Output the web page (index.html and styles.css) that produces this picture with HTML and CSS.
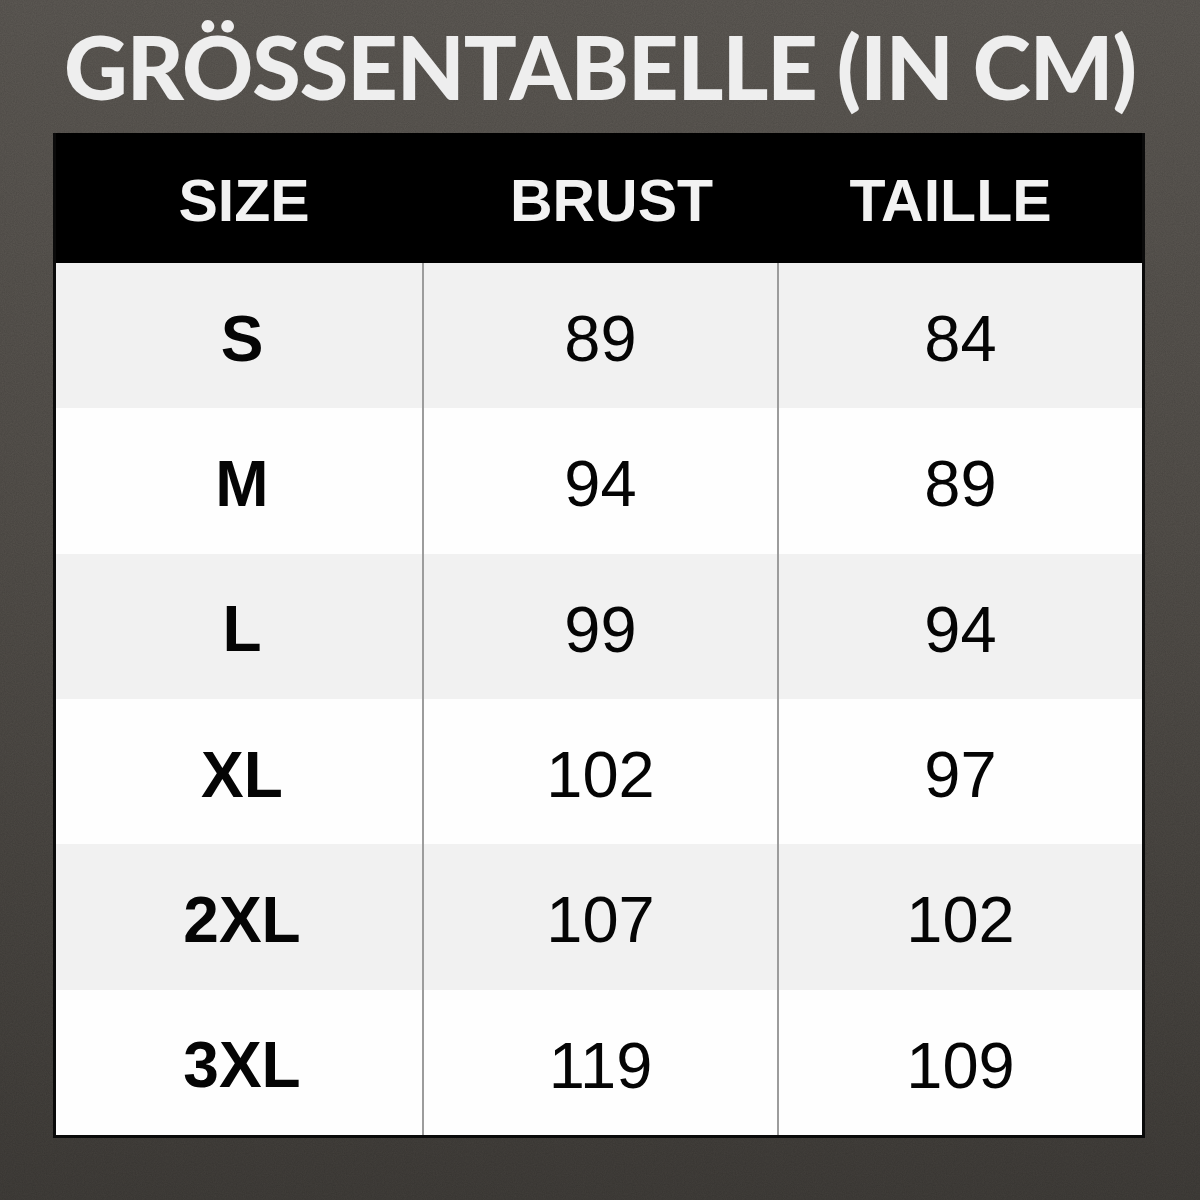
FILE: index.html
```html
<!DOCTYPE html>
<html lang="de">
<head>
<meta charset="utf-8">
<title>Größentabelle</title>
<link rel="stylesheet" href="styles.css">
</head>
<body>
<div class="page">
  <h1 class="title">GRÖSSENTABELLE (IN CM)</h1>
  <div class="table">
    <div class="head">
      <div class="hcell h1">SIZE</div>
      <div class="hcell h2">BRUST</div>
      <div class="hcell h3">TAILLE</div>
    </div>
    <div class="body">
      <div class="row alt"><div class="cell size">S</div><div class="cell num">89</div><div class="cell num">84</div></div>
      <div class="row"><div class="cell size">M</div><div class="cell num">94</div><div class="cell num">89</div></div>
      <div class="row alt"><div class="cell size">L</div><div class="cell num">99</div><div class="cell num">94</div></div>
      <div class="row"><div class="cell size">XL</div><div class="cell num">102</div><div class="cell num">97</div></div>
      <div class="row alt"><div class="cell size">2XL</div><div class="cell num">107</div><div class="cell num">102</div></div>
      <div class="row"><div class="cell size">3XL</div><div class="cell num">119</div><div class="cell num">109</div></div>
    </div>
  </div>
</div>
</body>
</html>
```

FILE: styles.css
```css
* { box-sizing: border-box; }
html, body { margin: 0; padding: 0; }
body {
  width: 1200px;
  height: 1200px;
  overflow: hidden;
  background-color: #4f4b47;
  background-image:
    url("data:image/svg+xml,%3Csvg xmlns='http://www.w3.org/2000/svg' width='300' height='300'%3E%3Cfilter id='n'%3E%3CfeTurbulence type='fractalNoise' baseFrequency='0.9' numOctaves='2' stitchTiles='stitch'/%3E%3CfeColorMatrix values='0 0 0 0 0  0 0 0 0 0  0 0 0 0 0  0 0 0 0.18 0'/%3E%3C/filter%3E%3Crect width='300' height='300' filter='url(%23n)'/%3E%3C/svg%3E"),
    linear-gradient(180deg, #5f5b56 0%, #55514c 45%, #423f3b 100%);
  font-family: "Liberation Sans", Arial, sans-serif;
}
.page {
  width: 1200px;
  height: 1200px;
  display: flex;
  flex-direction: column;
}
.title {
  margin: 0;
  height: 133px;
  display: flex;
  align-items: center;
  justify-content: center;
  font-family: "Lato", sans-serif;
  font-weight: 900;
  font-size: 88px;
  line-height: 1;
  color: #eeeeee;
  letter-spacing: -1px;
  padding-bottom: 2px;
  white-space: nowrap;
}
.table {
  margin: 0 55px 0 53px;
  border: 3px solid #0a0a0a;
  border-top: 0;
  height: 1005px;
  display: flex;
  flex-direction: column;
}
.head {
  height: 130px;
  background: #000;
  display: grid;
  grid-template-columns: 366px 355px 365px;
  align-items: center;
}
.hcell {
  color: #f2f2f2;
  font-weight: 700;
  font-size: 59px;
  text-align: center;
  padding-top: 6px;
}
.h1 { padding-left: 10px; }
.h2 { padding-left: 24px; }
.h3 { padding-right: 18px; }
.body {
  flex: 1;
  display: grid;
  grid-template-rows: repeat(6, 1fr);
}
.row {
  display: grid;
  grid-template-columns: 366px 355px 365px;
  background: #fefefe;
}
.row.alt { background: #f1f1f1; }
.cell {
  display: flex;
  align-items: center;
  justify-content: center;
  color: #050505;
  padding-top: 6px;
}
.cell + .cell { border-left: 2px solid #9c9c9c; }
.size {
  font-weight: 700;
  font-size: 64px;
  padding-left: 6px;
}
.num {
  font-weight: 400;
  font-size: 65px;
}
```
